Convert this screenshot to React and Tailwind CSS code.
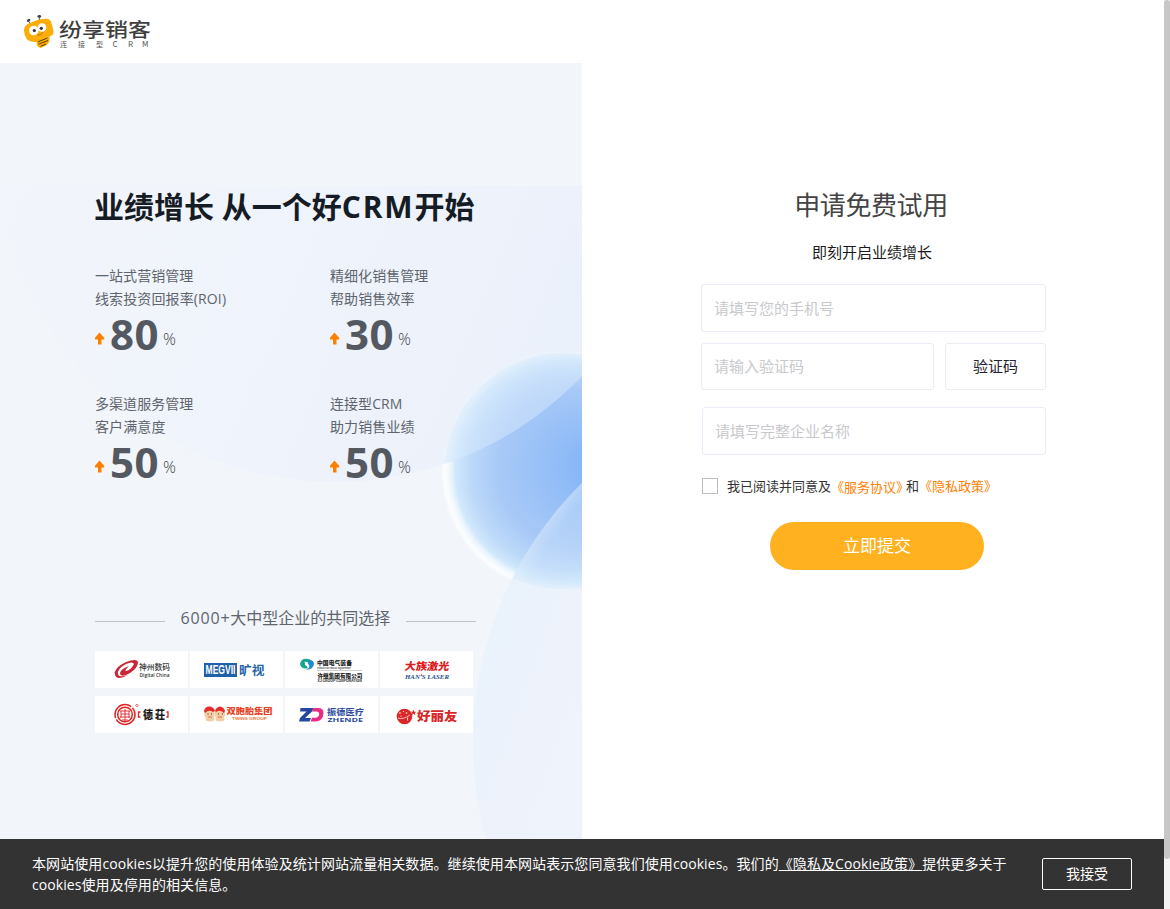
import React from "react";

const CJK = "'Noto Sans CJK SC', sans-serif";

function T({ x, y, w, s, fill = "#333", weight = 400, font = CJK, style, children }) {
  return (
    <text x={x} y={y} textLength={w} lengthAdjust="spacingAndGlyphs" fontSize={s} fill={fill} fontWeight={weight} fontFamily={font} fontStyle={style}>
      {children}
    </text>
  );
}

function BrandLogo() {
  return (
    <svg width="132" height="40" viewBox="20 11 132 40" className="block">
      <path d="M30.5 24.500L28.300 20.500M39.500 21L39.300 16.500" stroke="#444" strokeWidth="0.9" fill="none" />
      <ellipse cx="28.700" cy="20.300" rx="1.900" ry="1.300" fill="#444" transform="rotate(-35 28.700 20.300)" />
      <ellipse cx="39.300" cy="16.400" rx="1.900" ry="1.400" fill="#444" />
      <path d="M27 24.500Q36 19.500 45.500 18.800Q50 18.500 51.500 23Q52.800 28 53.500 31.500Q53.500 35.500 49.500 36.500L49.500 41.500Q47 46 40.500 48Q36.500 47 36.500 42Q31 42.500 27 39.500Q24 35 24 30.500Q24 26.500 27 24.500Z" fill="#fdad07" />
      <circle cx="33.800" cy="30.500" r="4.800" fill="#fff" />
      <circle cx="42" cy="27.500" r="4.300" fill="#fff" />
      <circle cx="34.300" cy="30.500" r="1.600" fill="#333" />
      <circle cx="41.300" cy="28.300" r="1.600" fill="#333" />
      <path d="M37 34.800Q40.500 36.500 43 32.200" stroke="#a66b00" strokeWidth="0.8" fill="none" />
      <path d="M38 41.800L47.500 38M38.500 44.200L48 40.500M40.500 46.300L46 44" stroke="#5a430f" strokeWidth="1" />
      <T x={59} y={36.500} w={92} s={19} weight={500} fill="#3f3f41">纷享销客</T>
      <g fontFamily={CJK} fontSize="7" fill="#555">
        <text x="60" y="47.300">连</text>
        <text x="78" y="47.300">接</text>
        <text x="96" y="47.300">型</text>
        <text x="112.500" y="47.300" fontSize="8">C</text>
        <text x="128" y="47.300" fontSize="8">R</text>
        <text x="142" y="47.300" fontSize="8">M</text>
      </g>
    </svg>
  );
}

function Backdrop() {
  return (
    <svg width="582" height="776" viewBox="0 63 582 776" className="absolute inset-0">
      <defs>
        <radialGradient id="ball" gradientUnits="userSpaceOnUse" cx="563" cy="471" r="122" fx="602" fy="465">
          <stop offset="0" stopColor="#7fb2f5" />
          <stop offset="0.350" stopColor="#96bff7" />
          <stop offset="0.650" stopColor="#a8c9f7" />
          <stop offset="0.820" stopColor="#bdd9f9" />
          <stop offset="0.920" stopColor="#d3eafb" />
          <stop offset="1" stopColor="#eaf4fd" stopOpacity="0" />
        </radialGradient>
        <radialGradient id="rim" gradientUnits="userSpaceOnUse" cx="563" cy="471" r="122">
          <stop offset="0.880" stopColor="#fff" stopOpacity="0" />
          <stop offset="0.970" stopColor="#fff" stopOpacity="0.800" />
          <stop offset="1" stopColor="#fff" stopOpacity="0.200" />
        </radialGradient>
        <linearGradient id="arcTop" gradientUnits="userSpaceOnUse" x1="0" y1="200" x2="582" y2="440">
          <stop offset="0" stopColor="#f2f5fb" />
          <stop offset="0.500" stopColor="#eff3fb" />
          <stop offset="1" stopColor="#eaf0fa" />
        </linearGradient>
        <linearGradient id="arcLow" gradientUnits="userSpaceOnUse" x1="473" y1="700" x2="582" y2="740">
          <stop offset="0" stopColor="#eaf2fb" />
          <stop offset="0.500" stopColor="#edf2fb" />
          <stop offset="1" stopColor="#eff3fb" />
        </linearGradient>
        <radialGradient id="lowTint" gradientUnits="userSpaceOnUse" cx="838" cy="743" r="365">
          <stop offset="0.850" stopColor="#d4e7fb" stopOpacity="0.300" />
          <stop offset="0.960" stopColor="#d4e7fb" stopOpacity="0.350" />
          <stop offset="1" stopColor="#dcecfd" stopOpacity="0.550" />
        </radialGradient>
        <clipPath id="panel"><rect x="0" y="186" width="582" height="653" /></clipPath>
        <clipPath id="disc"><circle cx="563" cy="471" r="118" /></clipPath>
        <mask id="bare" maskUnits="userSpaceOnUse" x="0" y="63" width="582" height="776">
          <rect x="0" y="63" width="582" height="776" fill="#fff" />
          <circle cx="335" cy="141" r="341" fill="#333" />
          <circle cx="838" cy="743" r="365" fill="#000" />
        </mask>
      </defs>
      <rect x="0" y="63" width="582" height="776" fill="#f2f5fa" />
      <g clipPath="url(#panel)">
        <circle cx="335" cy="141" r="341" fill="url(#arcTop)" />
        <circle cx="838" cy="743" r="365" fill="url(#arcLow)" />
        <circle cx="563" cy="471" r="122" fill="url(#ball)" />
        <circle cx="563" cy="471" r="122" fill="url(#rim)" mask="url(#bare)" />
        <g clipPath="url(#disc)">
          <circle cx="335" cy="141" r="341" fill="#d9eafc" fillOpacity="0.480" />
          <circle cx="838" cy="743" r="365" fill="url(#lowTint)" />
        </g>
      </g>
    </svg>
  );
}

function Arrow() {
  return (
    <svg width="10" height="13" viewBox="0 0 10 13" className="mt-[22px] shrink-0">
      <path d="M4.500 0.500L9.200 5.800V7.500H6.500V12.500H3V7.500H0V5.800Z" fill="#ff8000" />
    </svg>
  );
}

function Stat({ a, b, n }) {
  return (
    <div className="h-[128px] w-[235px] text-[14px] leading-[23px] text-[#60646c]">
      <div className="whitespace-nowrap tracking-[0.05px]">{a}</div>
      <div className="whitespace-nowrap tracking-[0.12px]">{b}</div>
      <div className="flex h-[48px]">
        <Arrow />
        <span className="ml-[5px] w-[49px] text-[42px] font-bold leading-[48px] tracking-[0.4px] text-[#545861]">{n}</span>
        <span className="ml-[4px] mt-[17px] text-[16px] font-light leading-[24px] text-[#444]">%</span>
      </div>
    </div>
  );
}

const partners = [
  <>
    <path d="M20 24Q18 17 31 11Q42 7 43 11Q43 17 35 22Q27 27 25 23Q25 18 34 15Q29 20 31 20Q36 19 39 13Q38 10 31 13Q22 18 23 23Q24 27 33 24Q22 30 20 24Z" fill="#c92637" />
    <T x={44} y={19} w={31} s={7.500} weight={500}>神州数码</T>
    <T x={44.500} y={26} w={30} s={5.500} font="'Open Sans', sans-serif" weight={600}>Digital China</T>
  </>,
  <>
    <rect x="14" y="12" width="33" height="14" fill="#2060a8" />
    <T x={15.500} y={23.300} w={30} s={12} fill="#fff" weight={700} font="'Liberation Sans', sans-serif">MEGVII</T>
    <T x={49} y={23.500} w={25.500} s={12} weight={700} fill="#2865aa">旷视</T>
  </>,
  <>
    <path d="M15 13Q16 7 23 8Q28 9 25 11.500Q19 10 20 14Q24 16 22 17.500Q16 18 15 13Z" fill="#18a58b" />
    <path d="M29 13Q28 19 21 18.500Q26 16 23.500 13.500Q21 10 26 9Q29 10 29 13Z" fill="#218bd0" />
    <path d="M19.500 11Q23 11.500 22.500 14.500Q22 16.500 24 17" stroke="#fff" strokeWidth="0.900" fill="none" />
    <T x={32} y={14} w={35} s={5.500} weight={900} fill="#222">中国电气装备</T>
    <T x={32} y={17.600} w={34} s={2.300} weight={700} fill="#333">CHINA ELECTRICAL EQUIPMENT</T>
    <path d="M32 19.500H77" stroke="#999" strokeWidth="0.500" />
    <T x={32.500} y={26.500} w={45} s={5.500} weight={900} fill="#222">许继集团有限公司</T>
    <T x={32.500} y={30.500} w={44.500} s={2.800} weight={700} fill="#222">XJ GROUP CORPORATION</T>
  </>,
  <>
    <g transform="skewX(-8)">
      <T x={27} y={19} w={44.500} s={10.500} weight={900} fill="#dc1820">大族激光</T>
    </g>
    <T x={25} y={27.500} w={44} s={6} weight={700} fill="#274f86" font="'Liberation Serif', serif" style="italic">HAN'S LASER</T>
    <circle cx="41.500" cy="24" r="0.700" fill="#dc1820" />
  </>,
  <>
    <g fill="none" stroke="#df2524">
      <circle cx="30" cy="18.500" r="10" strokeWidth="1.500" strokeDasharray="26 1.500" />
      <circle cx="30" cy="18.500" r="7.300" strokeWidth="1.500" />
      <path d="M25 15H35M26 18H34M25 21H35M27 24H33M30 13V25M26 15V22M34 15V22" strokeWidth="0.900" />
      <circle cx="42" cy="9.500" r="1.200" strokeWidth="0.600" />
      <path d="M45.500 16H43.500V21H45.500M71.500 16H73V21H71.500" strokeWidth="1.300" />
    </g>
    <T x={48} y={23} w={10} s={11} weight={900} fill="#181818">德</T>
    <T x={60} y={23} w={10} s={11} weight={900} fill="#181818">荘</T>
  </>,
  <>
    <g fill="#f2cda5"><circle cx="19.500" cy="18" r="5.300" /><circle cx="30" cy="18" r="5.300" /><ellipse cx="20" cy="23" rx="4.500" ry="2.500" /><ellipse cx="30" cy="23" rx="4.500" ry="2.500" /></g>
    <path d="M14 15Q15 10 20 10.500Q24 11 25 15Q26 11 30 10.500Q34 11 35 15L34 17Q30 13 26 16L25 15L23 16Q19 13 15 17Z" fill="#e52c2d" />
    <path d="M17.500 18H18.500M21 18H22M28 18H29M32 18H33" stroke="#5a3020" strokeWidth="1.200" />
    <path d="M18 21H22M28 21H32" stroke="#d4502f" strokeWidth="0.700" />
    <T x={36.500} y={18} w={46} s={7.500} weight={900} fill="#e5421f">双胞胎集团</T>
    <T x={42} y={23.500} w={35} s={3.600} weight={700} fill="#ee773e" font="'Liberation Sans', sans-serif">TWINS GROUP</T>
  </>,
  <>
    <path d="M15.500 12H28.500L27 15.500L20 22H26L24.500 25.500H14L15 22L21.500 15.500H15Z" fill="#2447a0" />
    <path d="M28.500 12H33Q38.500 12 38.500 17Q38 25 31 25.500H25.500L27 21.800H30Q34 21.500 34.200 18Q34.200 15.500 31.500 15.500H27Z" fill="#e92c83" />
    <T x={42} y={19} w={37} s={8.500} weight={700} fill="#2a4ba0">振德医疗</T>
    <T x={42.500} y={26} w={35.500} s={6} weight={700} fill="#2a4ba0" font="'Open Sans', sans-serif">ZHENDE</T>
  </>,
  <>
    <circle cx="24.500" cy="20.500" r="7.800" fill="#da2728" />
    <path d="M33.500 13.500L34.300 15.700L36.500 15.700L34.800 17L35.400 19L33.500 17.800L31.700 19L32.300 17L30.500 15.700L32.700 15.700Z" fill="#da2728" />
    <g fill="#fff"><circle cx="20" cy="17" r="0.800" /><circle cx="23.500" cy="15.500" r="0.600" /><circle cx="26.500" cy="17" r="0.800" /><circle cx="21" cy="20" r="0.600" /></g>
    <path d="M18 22Q23 24 30 19M27.500 21.500V24.500" stroke="#fff" strokeWidth="0.700" fill="none" />
    <T x={37} y={24.500} w={40.500} s={12.500} weight={900} fill="#d92829">好丽友</T>
  </>,
];

function Field({ className, children }) {
  return (
    <div className={"flex items-center rounded-[3px] border border-[#e9ebf5] bg-white text-[15px] text-[#c8c9cc] " + className}>
      {children}
    </div>
  );
}

export default function App() {
  return (
    <div className="flex h-[909px] w-[1170px] overflow-hidden bg-white [font-family:'Noto_Sans','Noto_Sans_CJK_SC',sans-serif]">
      <div className="flex w-[1164px] flex-col">
        <header className="h-[63px] shrink-0 pl-[20px] pt-[11px]">
          <BrandLogo />
        </header>

        <main className="flex h-[776px] shrink-0">
          <section className="relative w-[582px] shrink-0 overflow-hidden">
            <Backdrop />
            <div className="relative pl-[95px] pt-[122px] [font-family:'Open_Sans','Noto_Sans_CJK_SC',sans-serif]">
              <h1 className="-ml-px h-[44px] whitespace-nowrap text-[30px] font-bold leading-[44px] text-[#161c25]">
                业绩增长 从一个好<span className="tracking-[1.8px]">CRM</span>开始
              </h1>
              <div className="mt-[35px] flex h-[256px] w-[470px] flex-wrap">
                <Stat a="一站式营销管理" b="线索投资回报率(ROI)" n="80" />
                <Stat a="精细化销售管理" b="帮助销售效率" n="30" />
                <Stat a="多渠道服务管理" b="客户满意度" n="50" />
                <Stat a="连接型CRM" b="助力销售业绩" n="50" />
              </div>
              <div className="mt-[74px] flex h-[48px] w-[381px] items-center justify-between">
                <span className="mt-[6px] h-px w-[70px] bg-[#bfc3c9]" />
                <span className="whitespace-nowrap text-[16px] text-[#60646c]"><span className="tracking-[0.8px]">6000+</span>大中型企业的共同选择</span>
                <span className="mt-[6px] h-px w-[70px] bg-[#bfc3c9]" />
              </div>
              <div className="mt-[9px] grid w-[378px] grid-cols-4 gap-x-[2px] gap-y-[8px]">
                {partners.map((logo, i) => (
                  <svg key={i} viewBox="0 0 93 37" className="block h-[37px] w-[93px] bg-white">{logo}</svg>
                ))}
              </div>
            </div>
          </section>

          <section className="flex w-[582px] flex-col pl-[119px] pt-[122px]">
            <h2 className="w-[340px] text-center text-[26px] leading-[40px] tracking-[-0.4px] text-[#444]">申请免费试用</h2>
            <p className="mt-[15px] w-[342px] text-center text-[15px] leading-[24px] text-[#1a1a1a]">即刻开启业绩增长</p>
            <Field className="mt-[20px] h-[48px] w-[345px] pl-[12px]">请填写您的手机号</Field>
            <div className="mt-[11px] flex gap-[11px]">
              <Field className="h-[47px] w-[233px] pl-[12px]">请输入验证码</Field>
              <button className="h-[47px] w-[101px] rounded-[3px] border border-[#e9ebf5] text-[15px] text-[#1f2430]">验证码</button>
            </div>
            <Field className="ml-px mt-[17px] h-[48px] w-[344px] pl-[12px]">请填写完整企业名称</Field>
            <div className="mt-[21px] flex h-[20px] items-center whitespace-nowrap text-[13px] leading-[20px] text-[#333]">
              <span className="ml-px h-[16px] w-[16px] border border-[#bfbfbf]" />
              <span className="ml-[9px]">我已阅读并同意及</span>
              <span className="pt-[2px] text-[#ff8000]">《服务协议》</span>
              <span className="-ml-[3px]">和</span>
              <span className="text-[#ff8000]">《隐私政策》</span>
            </div>
            <button className="ml-[69px] mt-[26px] h-[48px] w-[214px] rounded-full bg-[#ffb120] text-[17px] text-white">立即提交</button>
          </section>
        </main>

        <footer className="flex h-[70px] shrink-0 bg-[#333] text-[14px] leading-[21px] text-white [font-family:'Open_Sans','Noto_Sans_CJK_SC',sans-serif]">
          <p className="ml-[32px] mt-[14px] w-[990px] whitespace-nowrap tracking-[0.08px]">
            本网站使用cookies以提升您的使用体验及统计网站流量相关数据。继续使用本网站表示您同意我们使用cookies。我们的<span className="underline">《隐私及Cookie政策》</span>提供更多关于
            <br />
            cookies使用及停用的相关信息。
          </p>
          <button className="ml-[20px] mt-[19px] h-[32px] w-[90px] rounded-[2px] border border-white pb-px text-[14px]">我接受</button>
        </footer>
      </div>
      <div className="w-[6px] bg-[#f3f3f3]">
        <div className="h-[859px] rounded-[3px] bg-[#c6c6c6]" />
      </div>
    </div>
  );
}
